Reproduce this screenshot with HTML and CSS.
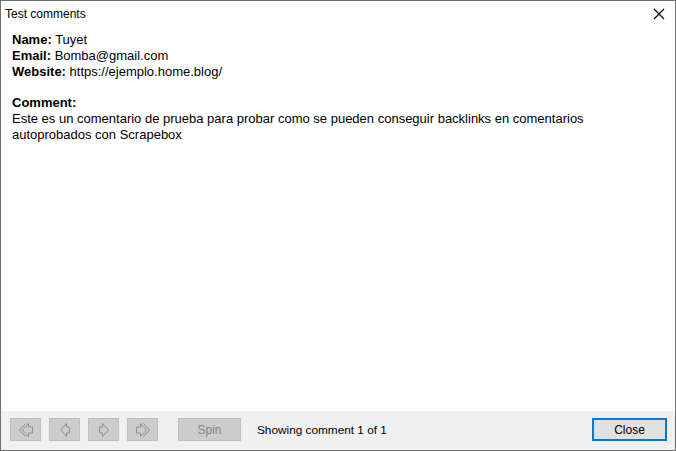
FILE: index.html
```html
<!DOCTYPE html>
<html lang="es">
<head>
    <meta charset="UTF-8">
    <title>Test comments</title>
    <link rel="stylesheet" href="styles.css">
</head>
<body>
    <div class="window">
        <div class="titlebar">
            <span class="title">Test comments</span>
            <span class="close-x">
                <svg width="12" height="12" viewBox="0 0 12 12"><path d="M1 1 L11 11 M11 1 L1 11" stroke="#000" stroke-width="1.1" fill="none"/></svg>
            </span>
        </div>

        <div class="content">
            <div><b>Name:</b> Tuyet</div>
            <div><b>Email:</b> Bomba@gmail.com</div>
            <div><b>Website:</b> https://ejemplo.home.blog/</div>
            <div class="gap"></div>
            <div><b>Comment:</b></div>
            <div class="comment">Este es un comentario de prueba para probar como se pueden conseguir backlinks en comentarios autoprobados con Scrapebox</div>
        </div>

        <div class="footer">
            <div class="nav">
                <button class="btn nav-btn" disabled>
                    <svg width="18" height="16" viewBox="0 0 18 16"><path d="M8.5 1.5 L2.5 8 L8.5 14.5 M11.5 1.5 L5.5 8 L11.5 14.5 L11.5 11 L15.5 11 L15.5 5 L11.5 5 Z" stroke="#8e8e8e" fill="none"/></svg>
                </button>
                <button class="btn nav-btn" disabled>
                    <svg width="18" height="16" viewBox="0 0 18 16"><path d="M10.5 1.5 L4.5 8 L10.5 14.5 L10.5 11 L13.5 11 L13.5 5 L10.5 5 Z" stroke="#8e8e8e" fill="none"/></svg>
                </button>
                <button class="btn nav-btn" disabled>
                    <svg width="18" height="16" viewBox="0 0 18 16"><path d="M7.5 1.5 L13.5 8 L7.5 14.5 L7.5 11 L4.5 11 L4.5 5 L7.5 5 Z" stroke="#8e8e8e" fill="none"/></svg>
                </button>
                <button class="btn nav-btn" disabled>
                    <svg width="18" height="16" viewBox="0 0 18 16"><path d="M9.5 1.5 L15.5 8 L9.5 14.5 M6.5 1.5 L12.5 8 L6.5 14.5 L6.5 11 L2.5 11 L2.5 5 L6.5 5 Z" stroke="#8e8e8e" fill="none"/></svg>
                </button>
            </div>
            <button class="btn spin-btn" disabled>Spin</button>
            <span class="status">Showing comment 1 of 1</span>
            <button class="btn close-btn">Close</button>
        </div>
    </div>
</body>
</html>
```

FILE: styles.css
```css
body {
    margin: 0;
    padding: 0;
    font-family: "Liberation Sans", Arial, sans-serif;
    background-color: #ffffff;
}

.window {
    width: 674px;
    height: 449px;
    border: 1px solid #707070;
    background-color: #ffffff;
    display: flex;
    flex-direction: column;
}

.titlebar {
    height: 26px;
    display: flex;
    justify-content: space-between;
    align-items: center;
    padding: 0 10px 0 4px;
    font-size: 12px;
    color: #000;
}

.close-x svg {
    display: block;
}

.content {
    flex: 1;
    padding: 5px 11px;
    font-size: 13px;
    line-height: 16px;
    color: #000;
}

.gap {
    height: 15px;
}

.footer {
    height: 39px;
    background-color: #f0f0f0;
    display: flex;
    align-items: center;
    padding: 0 8px 2px 9px;
    box-sizing: border-box;
}

.nav {
    display: flex;
    gap: 8px;
}

.btn {
    height: 23px;
    box-sizing: border-box;
    font-family: "Liberation Sans", Arial, sans-serif;
    font-size: 12px;
    padding: 0;
}

.nav-btn {
    width: 31px;
    background-color: #cccccc;
    border: 1px solid #bfbfbf;
    display: flex;
    align-items: center;
    justify-content: center;
}

.spin-btn {
    margin-left: 20px;
    width: 63px;
    background-color: #cccccc;
    border: 1px solid #bfbfbf;
    color: #838383;
}

.status {
    margin-left: 16px;
    font-size: 11.8px;
    color: #000;
}

.close-btn {
    margin-left: auto;
    width: 75px;
    background-color: #e1e1e1;
    border: 2px solid #0078d7;
    color: #000;
}
```
